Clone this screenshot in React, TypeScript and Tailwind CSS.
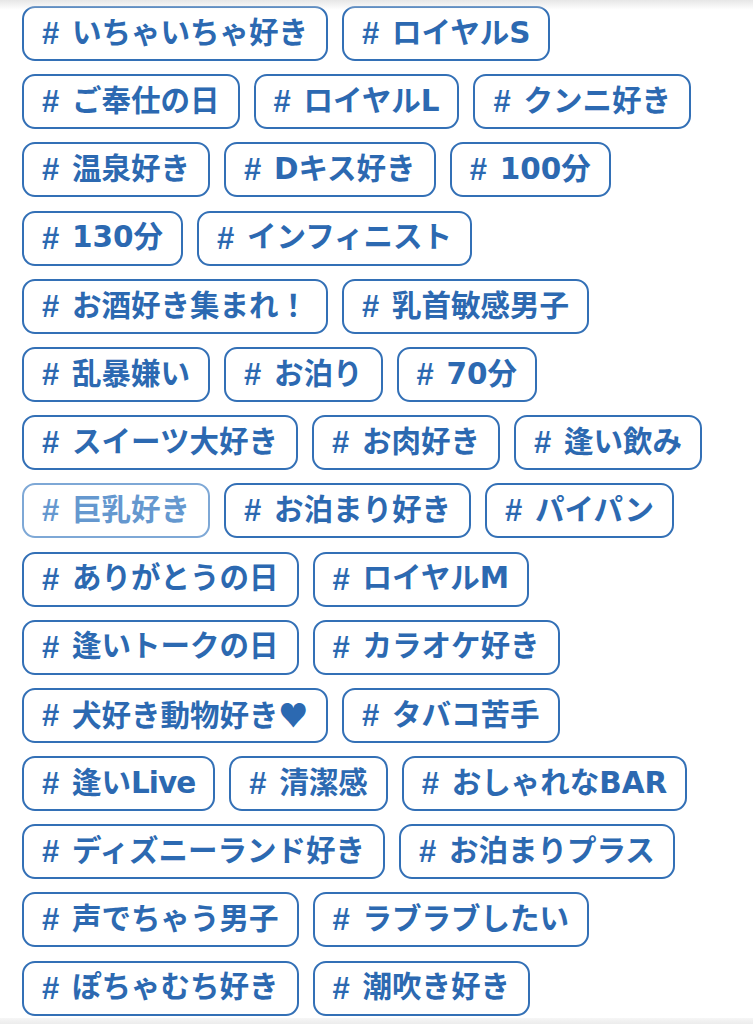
import React from "react";

type Tag = { label: string; faded?: boolean };

const rows: Tag[][] = [
  [{ label: "いちゃいちゃ好き" }, { label: "ロイヤルS" }],
  [{ label: "ご奉仕の日" }, { label: "ロイヤルL" }, { label: "クンニ好き" }],
  [{ label: "温泉好き" }, { label: "Dキス好き" }, { label: "100分" }],
  [{ label: "130分" }, { label: "インフィニスト" }],
  [{ label: "お酒好き集まれ！" }, { label: "乳首敏感男子" }],
  [{ label: "乱暴嫌い" }, { label: "お泊り" }, { label: "70分" }],
  [{ label: "スイーツ大好き" }, { label: "お肉好き" }, { label: "逢い飲み" }],
  [{ label: "巨乳好き", faded: true }, { label: "お泊まり好き" }, { label: "パイパン" }],
  [{ label: "ありがとうの日" }, { label: "ロイヤルM" }],
  [{ label: "逢いトークの日" }, { label: "カラオケ好き" }],
  [{ label: "犬好き動物好き♥" }, { label: "タバコ苦手" }],
  [{ label: "逢いLive" }, { label: "清潔感" }, { label: "おしゃれなBAR" }],
  [{ label: "ディズニーランド好き" }, { label: "お泊まりプラス" }],
  [{ label: "声でちゃう男子" }, { label: "ラブラブしたい" }],
  [{ label: "ぽちゃむち好き" }, { label: "潮吹き好き" }],
];

function Label({ text }: { text: string }) {
  if (text.endsWith("♥")) {
    return (
      <>
        {text.slice(0, -1)}
        <span className="font-['Noto_Sans_CJK_JP',sans-serif]">♥</span>
      </>
    );
  }
  if (text.endsWith("Live")) {
    return (
      <>
        {text.slice(0, -4)}
        <span className="tracking-[-1px]">Live</span>
      </>
    );
  }
  return <>{text}</>;
}

function TagChip({ tag }: { tag: Tag }) {
  const color = tag.faded
    ? "border-[#7ea8d6] text-[#6598cf]"
    : "border-[#3370b6] text-[#2c69b1]";
  return (
    <div
      className={`flex h-[55px] items-center rounded-[13px] border-2 bg-white pl-[18px] pr-[18px] ${color}`}
    >
      <span className="inline-block w-[30px] font-['Liberation_Sans',sans-serif] text-[31px] font-bold leading-none">
        #
      </span>
      <span className="whitespace-nowrap font-['DejaVu_Sans','Noto_Sans_CJK_JP',sans-serif] text-[29.5px] font-bold leading-none">
        <Label text={tag.label} />
      </span>
    </div>
  );
}

export default function App() {
  return (
    <div className="relative h-[1024px] w-full overflow-hidden bg-white">
      <div className="flex flex-col gap-y-[13.2px] pl-[22px] pt-[6px]">
        {rows.map((row, i) => (
          <div key={i} className="flex gap-x-[14px]">
            {row.map((t, j) => (
              <TagChip key={j} tag={t} />
            ))}
          </div>
        ))}
      </div>
      <div className="pointer-events-none absolute left-0 right-0 top-0 h-[10px] bg-gradient-to-b from-[#e6e6e6] to-transparent" />
      <div className="pointer-events-none absolute bottom-0 left-0 right-0 h-[6px] bg-gradient-to-t from-[#ececec] to-[#f6f6f6]" />
    </div>
  );
}
